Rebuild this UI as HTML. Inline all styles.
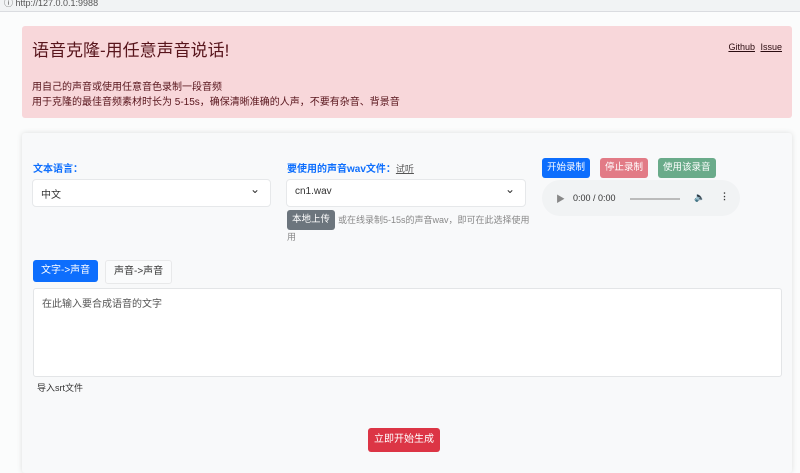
<!DOCTYPE html>
<html><head><meta charset="utf-8"><style>
*{box-sizing:border-box;margin:0;padding:0}
body{width:800px;height:461px;overflow:hidden;background:#fbfcfc;font-family:"Liberation Sans","Noto Sans CJK SC",sans-serif;position:relative;color:#212529}
.bar{position:absolute;left:0;top:0;width:800px;height:12px;background:#f1f3f4;border-bottom:1px solid #dadce0;font-size:9px;color:#555;line-height:6px;padding-left:4px;overflow:hidden}
.alert{position:absolute;left:22px;top:26px;width:770px;height:92px;background:#f8d7da;border-radius:3px;color:#58151c}
.alert h1{position:absolute;left:10px;top:10px;font-size:17px;font-weight:400}
.alert .links{position:absolute;right:10px;top:16px;font-size:9px;color:#2b0c10}
.alert .links a{color:#2b0c10;text-decoration:underline;margin-left:3px}
.alert p{position:absolute;left:10px;font-size:10px;color:#58151c}
.card{position:absolute;left:22px;top:133px;width:770px;height:340px;background:#f8f9fa;box-shadow:0 0 6px rgba(0,0,0,.12);border-radius:3px}
.lbl{position:absolute;font-size:10px;font-weight:700;color:#0d6efd}
.sel{position:absolute;background:#fff;border:1px solid #e6e8ea;border-radius:4px;height:28px;font-size:10px;color:#333;padding:6px 8px}
.sel:after{content:"⌄";position:absolute;right:10px;top:2px;font-size:12px}
.btn{position:absolute;font-size:9.5px;color:#fff;border-radius:3px;padding:4px 5px;line-height:12px}
</style></head><body>
<div class="bar">ⓘ http://127.0.0.1:9988</div>
<div class="alert">
<h1>语音克隆-用任意声音说话!</h1>
<div class="links"><a>Github</a> <a>Issue</a></div>
<p style="top:52px">用自己的声音或使用任意音色录制一段音频</p>
<p style="top:67px">用于克隆的最佳音频素材时长为 5-15s，确保清晰准确的人声，不要有杂音、背景音</p>
</div>
<div class="card"></div>
<div class="lbl" style="left:33px;top:160px">文本语言：</div>
<div class="sel" style="left:32px;top:179px;width:239px">中文</div>
<div class="lbl" style="left:287px;top:160px">要使用的声音wav文件：<span style="color:#555;font-weight:400;text-decoration:underline;font-size:9px">试听</span></div>
<div class="sel" style="left:286px;top:179px;width:240px">cn1.wav</div>
<div class="btn" style="left:287px;top:210px;background:#6c757d">本地上传</div>
<div style="position:absolute;left:338px;top:213px;font-size:9px;color:#888">或在线录制5-15s的声音wav，即可在此选择使用</div>
<div style="position:absolute;left:287px;top:230px;font-size:9px;color:#888">用</div>
<div class="btn" style="left:542px;top:158px;background:#0d6efd">开始录制</div>
<div class="btn" style="left:600px;top:158px;background:#e27b86">停止录制</div>
<div class="btn" style="left:658px;top:158px;background:#6aab8a">使用该录音</div>
<div style="position:absolute;left:542px;top:180px;width:198px;height:36px;border-radius:18px;background:#f1f3f4;font-size:9px;color:#333">
<span style="position:absolute;left:14px;top:12px;color:#888">▶</span>
<span style="position:absolute;left:31px;top:13px">0:00 / 0:00</span>
<span style="position:absolute;left:88px;top:18px;width:50px;height:2px;background:#bbb"></span>
<span style="position:absolute;left:152px;top:12px;color:#888">🔈</span>
<span style="position:absolute;left:178px;top:11px;font-weight:700">⋮</span>
</div>
<div class="btn" style="left:33px;top:260px;background:#0d6efd;padding:5px 8px;font-size:10px">文字->声音</div>
<div style="position:absolute;left:105px;top:260px;border:1px solid #e8e9ea;background:#fafbfc;border-radius:3px;padding:5px 8px;font-size:10px;line-height:12px;color:#333">声音->声音</div>
<div style="position:absolute;left:33px;top:288px;width:749px;height:89px;background:#fff;border:1px solid #e3e5e7;border-radius:3px;font-size:10px;color:#555;padding:6px 8px">在此输入要合成语音的文字</div>
<div style="position:absolute;left:37px;top:381px;font-size:9px;color:#333">导入srt文件</div>
<div class="btn" style="left:368px;top:428px;background:#dc3545;padding:6px 6px;font-size:10px">立即开始生成</div>
</body></html>
